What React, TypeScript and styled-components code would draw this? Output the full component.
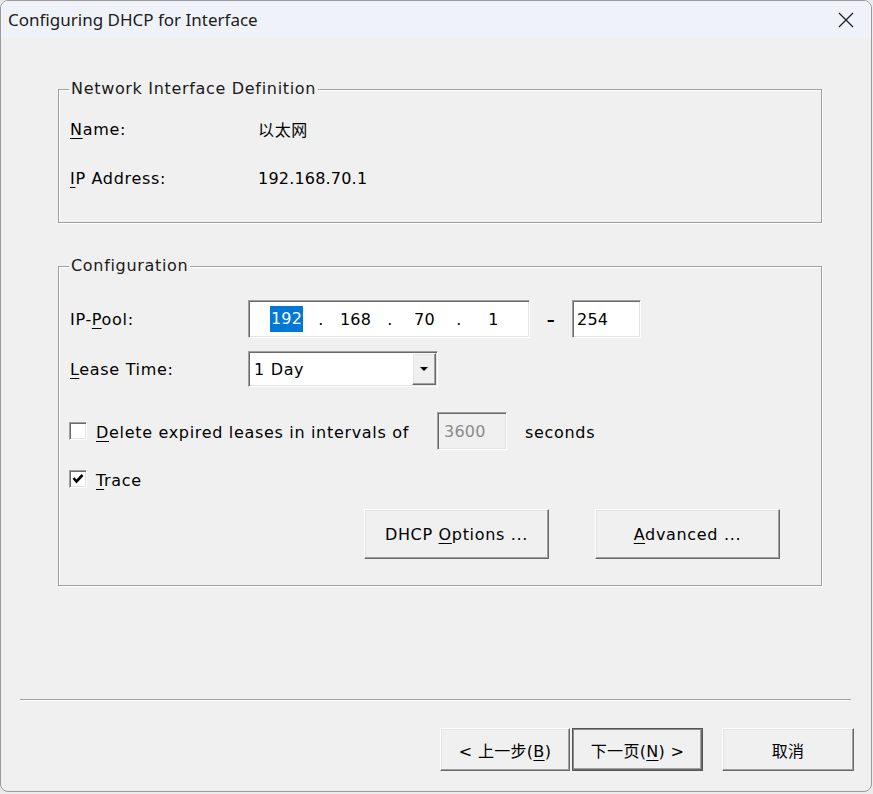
import React from 'react';
import styled, { createGlobalStyle, css } from 'styled-components';

const UI_FONT = `"DejaVu Sans", "Noto Sans CJK SC", sans-serif`;

const GlobalStyle = createGlobalStyle`
  html, body {
    margin: 0;
    padding: 0;
    background: #ececec;
  }
  body {
    font-family: ${UI_FONT};
  }
`;

// classic 3D bevels
const raised = css`
  background: #f0f0f0;
  border: 1px solid;
  border-color: #ffffff #696969 #696969 #ffffff;
  box-shadow: inset -1px -1px 0 #a0a0a0, inset 1px 1px 0 #e3e3e3;
`;

const sunken = css`
  border: 1px solid;
  border-color: #a0a0a0 #ffffff #ffffff #a0a0a0;
  box-shadow: inset 1px 1px 0 #696969, inset -1px -1px 0 #e3e3e3;
`;

const Window = styled.div`
  width: 872px;
  height: 792px;
  box-sizing: border-box;
  border: 1px solid #9b9b9b;
  border-radius: 8px;
  background: #f0f0f0;
  display: flex;
  flex-direction: column;
  overflow: hidden;
  font-family: ${UI_FONT};
  font-size: 16px;
  letter-spacing: 0.68px;
  color: #000;
`;

const TitleBar = styled.div`
  flex: none;
  height: 37px;
  display: flex;
  align-items: center;
  justify-content: space-between;
  padding-left: 7px;
  background: #eff3f9;
`;

const Title = styled.span`
  font-family: "Noto Sans", sans-serif;
  font-size: 17px;
  letter-spacing: 0;
  color: #1b1b1b;
`;

const CloseButton = styled.button`
  width: 50px;
  height: 37px;
  padding: 0;
  border: 0;
  background: transparent;
  display: flex;
  align-items: center;
  justify-content: center;
`;

const Content = styled.div`
  flex: 1;
  display: flex;
  flex-direction: column;
  gap: 33px;
  padding: 41px 49px 0 57px;
`;

const GroupBox = styled.fieldset<{ $pad: string }>`
  margin: 0;
  min-width: 0;
  padding: ${(p) => p.$pad};
  border: 1px solid #a0a0a0;
  box-shadow: 1px 1px 0 #ffffff, inset 1px 1px 0 #ffffff;
`;

const Legend = styled.legend`
  margin-left: -1px;
  padding: 0 2px;
  line-height: 20px;
  background: #f0f0f0;
  color: #1a1a1a;
`;

const InfoRow = styled.div<{ $gap?: number }>`
  display: grid;
  grid-template-columns: 188px 1fr;
  align-items: center;
  height: 24px;
  margin-top: ${(p) => p.$gap ?? 0}px;
`;

const Digits = styled.span`
  letter-spacing: 0.2px;
`;

const FieldRow = styled.div<{ $gap?: number; $height: number }>`
  display: flex;
  align-items: center;
  height: ${(p) => p.$height}px;
  margin-top: ${(p) => p.$gap ?? 0}px;
`;

const Label = styled.span`
  width: 178px;
  flex: none;
`;

const Key = styled.span`
  text-decoration: underline;
  text-underline-offset: 3px;
  text-decoration-thickness: 1px;
`;

const IpBox = styled.div`
  ${sunken}
  box-sizing: border-box;
  width: 282px;
  height: 38px;
  display: flex;
  align-items: center;
  padding: 0 1px 0 3px;
  background: #ffffff;
  letter-spacing: 0.2px;
`;

const Octet = styled.span`
  flex: 0 0 69px;
  text-align: center;
`;

const Dot = styled.span`
  width: 0;
  display: flex;
  justify-content: center;
`;

const Selected = styled.span`
  display: inline-block;
  padding: 0 1px;
  line-height: 26px;
  background: #0078d7;
  color: #ffffff;
`;

const RangeDash = styled.span`
  width: 42px;
  text-align: center;
  font-weight: bold;
`;

const TextBox = styled.div<{ $width: number; $disabled?: boolean }>`
  ${sunken}
  box-sizing: border-box;
  width: ${(p) => p.$width}px;
  height: 38px;
  display: flex;
  align-items: center;
  padding-left: ${(p) => (p.$disabled ? 6 : 4)}px;
  background: ${(p) => (p.$disabled ? '#f0f0f0' : '#ffffff')};
  color: ${(p) => (p.$disabled ? '#8a8a8a' : '#000')};
  letter-spacing: 0.2px;
`;

const ComboBox = styled.div`
  ${sunken}
  box-sizing: border-box;
  width: 190px;
  height: 36px;
  padding: 1px;
  display: flex;
  align-items: stretch;
  background: #ffffff;
`;

const ComboValue = styled.span`
  flex: 1;
  display: flex;
  align-items: center;
  padding-left: 4px;
`;

const ArrowButton = styled.span`
  ${raised}
  width: 24px;
  box-sizing: border-box;
  display: flex;
  align-items: center;
  justify-content: center;
`;

const Triangle = styled.span`
  width: 0;
  height: 0;
  border-left: 4px solid transparent;
  border-right: 4px solid transparent;
  border-top: 4px solid #000;
`;

const CheckBox = styled.span`
  ${sunken}
  box-sizing: border-box;
  flex: none;
  width: 18px;
  height: 18px;
  margin-left: -1px;
  background: #ffffff;
  display: flex;
  align-items: center;
  justify-content: center;
`;

const CheckLabel = styled.span<{ $width?: number }>`
  margin-left: 9px;
  padding-top: 2px;
  width: ${(p) => (p.$width ? `${p.$width}px` : 'auto')};
  flex: none;
`;

const Suffix = styled.span`
  margin-left: 18px;
  padding-top: 2px;
`;

const ActionRow = styled.div`
  display: flex;
  justify-content: flex-end;
  gap: 46px;
  margin-top: 21px;
  padding-right: 30px;
`;

const PushButton = styled.button<{ $width: number; $height: number; $isDefault?: boolean }>`
  ${raised}
  box-sizing: border-box;
  width: ${(p) => p.$width}px;
  height: ${(p) => p.$height}px;
  padding: 0;
  font: inherit;
  letter-spacing: inherit;
  color: #000;
  ${(p) =>
    p.$isDefault &&
    css`
      border: 1px solid #555555;
      box-shadow: inset 1px 1px 0 #8a8a8a, inset -1px -1px 0 #696969, inset -2px -2px 0 #a0a0a0;
    `}
`;

const Footer = styled.div`
  flex: none;
  display: flex;
  flex-direction: column;
  padding: 0 17px 20px 19px;
`;

const Separator = styled.div`
  height: 1px;
  margin-right: 3px;
  background: #a0a0a0;
  border-bottom: 1px solid #ffffff;
`;

const ButtonBar = styled.div`
  display: flex;
  justify-content: flex-end;
  margin-top: 27px;
  letter-spacing: 0.3px;
`;

const WizardButton = styled(PushButton)<{ $space?: number }>`
  margin-left: ${(p) => p.$space ?? 0}px;
`;

const App: React.FC = () => {
  return (
    <>
      <GlobalStyle />
      <Window>
        <TitleBar>
          <Title>Configuring DHCP for Interface</Title>
          <CloseButton aria-label="Close">
            <svg width="16" height="16" viewBox="0 0 16 16">
              <path d="M1 1 L15 15 M15 1 L1 15" stroke="#1a1a1a" strokeWidth="1.2" fill="none" />
            </svg>
          </CloseButton>
        </TitleBar>

        <Content>
          <GroupBox $pad="18px 11px 32px 11px">
            <Legend>Network Interface Definition</Legend>
            <InfoRow>
              <span>
                <Key>N</Key>ame:
              </span>
              <span>以太网</span>
            </InfoRow>
            <InfoRow $gap={25}>
              <span>
                <Key>I</Key>P Address:
              </span>
              <Digits>192.168.70.1</Digits>
            </InfoRow>
          </GroupBox>

          <GroupBox $pad="24px 11px 26px 11px">
            <Legend>Configuration</Legend>
            <FieldRow $height={38}>
              <Label>
                IP-<Key>P</Key>ool:
              </Label>
              <IpBox>
                <Octet>
                  <Selected>192</Selected>
                </Octet>
                <Dot>.</Dot>
                <Octet>168</Octet>
                <Dot>.</Dot>
                <Octet>70</Octet>
                <Dot>.</Dot>
                <Octet>1</Octet>
              </IpBox>
              <RangeDash>–</RangeDash>
              <TextBox $width={69}>254</TextBox>
            </FieldRow>

            <FieldRow $height={36} $gap={13}>
              <Label>
                <Key>L</Key>ease Time:
              </Label>
              <ComboBox>
                <ComboValue>1 Day</ComboValue>
                <ArrowButton>
                  <Triangle />
                </ArrowButton>
              </ComboBox>
            </FieldRow>

            <FieldRow $height={38} $gap={25}>
              <CheckBox />
              <CheckLabel $width={341}>
                <Key>D</Key>elete expired leases in intervals of
              </CheckLabel>
              <TextBox $width={70} $disabled>
                3600
              </TextBox>
              <Suffix>seconds</Suffix>
            </FieldRow>

            <FieldRow $height={18} $gap={20}>
              <CheckBox>
                <svg width="12" height="12" viewBox="0 0 12 12">
                  <path d="M1.5 5 L4.5 8.5 L10.5 2" stroke="#000" strokeWidth="2.6" fill="none" />
                </svg>
              </CheckBox>
              <CheckLabel>
                <Key>T</Key>race
              </CheckLabel>
            </FieldRow>

            <ActionRow>
              <PushButton $width={185} $height={50}>
                DHCP <Key>O</Key>ptions ...
              </PushButton>
              <PushButton $width={185} $height={50}>
                <Key>A</Key>dvanced ...
              </PushButton>
            </ActionRow>
          </GroupBox>
        </Content>

        <Footer>
          <Separator />
          <ButtonBar>
            <WizardButton $width={130} $height={43}>
              &lt; 上一步(<Key>B</Key>)
            </WizardButton>
            <WizardButton $width={131} $height={43} $space={2} $isDefault>
              下一页(<Key>N</Key>) &gt;
            </WizardButton>
            <WizardButton $width={132} $height={43} $space={19}>
              取消
            </WizardButton>
          </ButtonBar>
        </Footer>
      </Window>
    </>
  );
};

export default App;
